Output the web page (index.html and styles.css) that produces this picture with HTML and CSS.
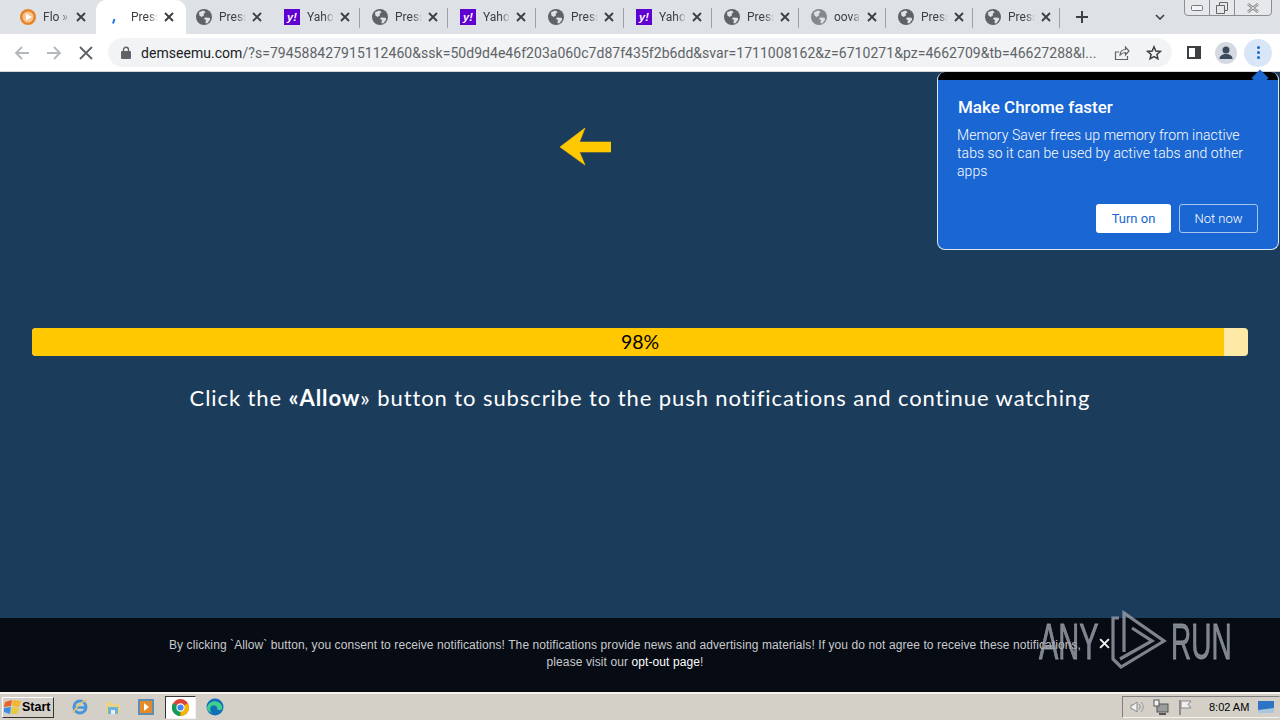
FILE: index.html
```html
<!DOCTYPE html>
<html lang="en">
<head>
<meta charset="utf-8">
<title>Press Allow</title>
<link rel="stylesheet" href="styles.css">
</head>
<body>
<svg class="defs" width="0" height="0" aria-hidden="true">
  <symbol id="globe" viewBox="0 0 16 16">
    <circle cx="8" cy="8" r="8" fill="currentColor"/>
    <path d="M3 3.2 7.4 1.6 9.6 3 7.6 5 8 6.6 5.6 8 3.4 6.4ZM9 8.4l4.6.4.6 1.6-3 4-1.8-.4.6-3L8 10Z" fill="#dee1e6"/>
  </symbol>
  <symbol id="close" viewBox="0 0 10 10">
    <path d="M1 1 9 9M9 1 1 9" stroke="currentColor" stroke-width="1.9" fill="none"/>
  </symbol>
</svg>

<header class="tabstrip">
  <div class="tab"><svg class="favicon" viewBox="0 0 16 16"><circle cx="8" cy="8" r="8" fill="#e8832c"/><circle cx="8" cy="8" r="5.5" fill="#f9c48e"/><path d="M6 4.5 12 8l-6 3.5Z" fill="#fff"/></svg><span class="tab-title">Flo »</span><svg class="tab-close"><use href="#close"/></svg></div>
  <div class="tab active"><svg class="favicon" viewBox="0 0 16 16"><path d="M5 14.500 6.500 10" stroke="#1a73e8" stroke-width="2" fill="none"/></svg><span class="tab-title">Press</span><svg class="tab-close"><use href="#close"/></svg></div>
  <div class="tab"><svg class="favicon globe"><use href="#globe"/></svg><span class="tab-title">Press</span><svg class="tab-close"><use href="#close"/></svg></div>
  <div class="tab"><span class="favicon yahoo">y!</span><span class="tab-title">Yahoo</span><svg class="tab-close"><use href="#close"/></svg></div>
  <div class="tab"><svg class="favicon globe"><use href="#globe"/></svg><span class="tab-title">Press</span><svg class="tab-close"><use href="#close"/></svg></div>
  <div class="tab"><span class="favicon yahoo">y!</span><span class="tab-title">Yahoo</span><svg class="tab-close"><use href="#close"/></svg></div>
  <div class="tab"><svg class="favicon globe"><use href="#globe"/></svg><span class="tab-title">Press</span><svg class="tab-close"><use href="#close"/></svg></div>
  <div class="tab"><span class="favicon yahoo">y!</span><span class="tab-title">Yahoo</span><svg class="tab-close"><use href="#close"/></svg></div>
  <div class="tab narrow"><svg class="favicon globe"><use href="#globe"/></svg><span class="tab-title">Press</span><svg class="tab-close"><use href="#close"/></svg></div>
  <div class="tab narrow"><svg class="favicon globe light"><use href="#globe"/></svg><span class="tab-title">oova</span><svg class="tab-close"><use href="#close"/></svg></div>
  <div class="tab narrow"><svg class="favicon globe"><use href="#globe"/></svg><span class="tab-title">Press</span><svg class="tab-close"><use href="#close"/></svg></div>
  <div class="tab narrow"><svg class="favicon globe"><use href="#globe"/></svg><span class="tab-title">Press</span><svg class="tab-close"><use href="#close"/></svg></div>
  <svg class="new-tab" viewBox="0 0 12 12"><path d="M6 0v12M0 6h12" stroke="#3c4043" stroke-width="2"/></svg>
  <svg class="tab-list" viewBox="0 0 10 6"><path d="M1 1 5 5 9 1" stroke="#3c4043" stroke-width="1.6" fill="none"/></svg>
  <div class="window-controls">
    <span class="win-btn win-min"><svg viewBox="0 0 12 6" width="12" height="6"><rect x=".5" y=".5" width="11" height="5" rx="1" fill="#f3f4f6" stroke="#777"/></svg></span>
    <span class="win-btn win-max"><svg viewBox="0 0 12 12" width="12" height="12"><path d="M3.5 3V.5h8v8H9M.5 3.5h8v8h-8Z" fill="none" stroke="#666"/></svg></span>
    <span class="win-btn win-x"><svg viewBox="0 0 12 10" width="12" height="10"><path d="M1 1l10 8M11 1 1 9" stroke="#777" stroke-width="2.4"/><path d="M1 1l10 8M11 1 1 9" stroke="#eee" stroke-width="1"/></svg></span>
  </div>
</header>

<nav class="toolbar">
  <svg class="nav-icon" viewBox="0 0 16 16"><path d="M15 8H2M8 2 2 8l6 6" stroke="#b4b7bb" stroke-width="1.8" fill="none"/></svg>
  <svg class="nav-icon" viewBox="0 0 16 16"><path d="M1 8h13M8 2l6 6-6 6" stroke="#b4b7bb" stroke-width="1.8" fill="none"/></svg>
  <svg class="nav-icon" viewBox="0 0 16 16"><path d="M2 2l12 12M14 2 2 14" stroke="#5f6368" stroke-width="1.9" fill="none"/></svg>
  <div class="omnibox">
    <svg class="lock" viewBox="0 0 10 13"><path d="M2.5 6V3.8a2.5 2.5 0 0 1 5 0V6" fill="none" stroke="#5f6368" stroke-width="1.4"/><rect y="5" width="10" height="8" rx="1.2" fill="#5f6368"/></svg>
    <span class="url"><span class="url-host">demseemu.com</span>/?s=794588427915112460&amp;ssk=50d9d4e46f203a060c7d87f435f2b6dd&amp;svar=1711008162&amp;z=6710271&amp;pz=4662709&amp;tb=46627288&amp;l...</span>
    <svg class="omni-icon share" viewBox="0 0 16 16"><path d="M5 7H1.500v7.500h12V11M6 10c0-3.500 2.500-5.500 5.500-5.500V2L15 6l-3.500 4V7.500C9 7.500 7.500 8.500 6 10Z" fill="none" stroke="#5f6368" stroke-width="1.200"/></svg>
    <svg class="omni-icon star" viewBox="0 0 16 16"><path d="M8 1.800l1.800 4.200 4.500.4-3.400 3 1 4.400L8 11.500l-3.900 2.300 1-4.400-3.400-3 4.500-.4Z" fill="none" stroke="#3c4043" stroke-width="1.500"/></svg>
  </div>
  <svg class="side-panel" viewBox="0 0 14 13"><rect x="1" y="1" width="12" height="11" fill="#fff" stroke="#3c4043" stroke-width="2"/><rect x="8" y="1" width="5" height="11" fill="#3c4043"/></svg>
  <span class="avatar"><svg viewBox="0 0 20 20" width="20" height="20"><circle cx="10" cy="7" r="3.500" fill="#3c4a5e"/><path d="M3.500 16c0-3.500 3-5 6.500-5s6.500 1.500 6.500 5Z" fill="#3c4a5e"/></svg></span>
  <span class="menu-btn"><i></i><i></i><i></i></span>
</nav>

<main class="page">
  <svg class="arrow" viewBox="0 0 51 39" width="51" height="39"><path d="M0 20 25 1 19.500 15H51V25H19.500L25 38Z" fill="#ffc800" stroke="#ffc800" stroke-width=".6"/></svg>
  <div class="progress" role="progressbar" aria-valuenow="98"><div class="progress-fill"></div><span class="progress-label">98%</span></div>
  <p class="message">Click the <b>«Allow</b>» button to subscribe to the push notifications and continue watching</p>

  <aside class="bubble">
    <div class="bubble-arrow"></div>
    <h2>Make Chrome faster</h2>
    <p>Memory Saver frees up memory from inactive tabs so it can be used by active tabs and other apps</p>
    <div class="bubble-actions"><span class="btn btn-primary">Turn on</span><span class="btn btn-ghost">Not now</span></div>
  </aside>
</main>

<section class="consent">
  <p>By clicking `Allow` button, you consent to receive notifications! The notifications provide news and advertising materials! If you do not agree to receive these notifications,<br>please visit our <span class="opt-out">opt-out page</span>!</p>
  <svg class="consent-close" viewBox="0 0 10 10"><path d="M1 1 9 9M9 1 1 9" stroke="#f0f0f0" stroke-width="1.800"/></svg>
  <div class="watermark">
    <span class="wm-any">ANY</span>
    <svg viewBox="0 0 58 64" width="58" height="64"><path d="M9 8H3V49L11 57 54 31 14 3V42M10 49 42 31 22 18" fill="none" stroke="currentColor" stroke-width="3.200"/></svg>
    <span class="wm-run">RUN</span>
  </div>
</section>

<footer class="taskbar">
  <div class="start"><svg viewBox="0 0 18 16" width="18" height="16"><path d="M1 3 8 1 7 7 0 8Z" fill="#e8632c"/><path d="M9 1 17 2 15 8 8 7Z" fill="#f2b632"/><path d="M0 9 7 8 6 15 0 13Z" fill="#3b8ee0"/><path d="M8 8 15 9 13 15 7 15Z" fill="#e9c93a"/></svg><b>Start</b></div>
  <svg class="task-icon" viewBox="0 0 18 18"><circle cx="9" cy="9" r="6" fill="none" stroke="#4a94d8" stroke-width="3"/><path d="M3 9.500h12" stroke="#4a94d8" stroke-width="2.500"/><path d="M2 15C5 9 11 3 16 2" stroke="#e5c66b" stroke-width="1.500" fill="none"/></svg>
  <svg class="task-icon" viewBox="0 0 18 18"><path d="M2 4h6l1 2h7v10H2Z" fill="#e9d28a"/><rect x="4" y="9" width="10" height="7" fill="#6fb2d8"/><rect x="7" y="12" width="4" height="4" fill="#e8eef2"/></svg>
  <svg class="task-icon" viewBox="0 0 18 18"><rect x="1" y="1" width="16" height="16" fill="#5e8db8"/><rect x="3" y="3" width="12" height="12" fill="#e58a24"/><path d="M7 5l5 4-5 4Z" fill="#fff"/></svg>
  <span class="task-active"><svg viewBox="0 0 18 18" width="17" height="17"><circle cx="9" cy="9" r="9" fill="#db4437"/><path d="M9 9 1.200 4.500A9 9 0 0 0 9 18Z" fill="#0f9d58"/><path d="M9 9V18A9 9 0 0 0 16.800 4.500Z" fill="#f4b400"/><circle cx="9" cy="9" r="4.400" fill="#fff"/><circle cx="9" cy="9" r="3.300" fill="#4285f4"/></svg></span>
  <svg class="task-icon" viewBox="0 0 18 18"><circle cx="9" cy="9" r="8.500" fill="#0f6fb8"/><path d="M1 10C2 4 8 2 12 4c3 1.500 5 4 4 7-1 1.500-4 1.500-5 0 1-2-1-4-4-3.500C4 8 3 12 6 15 3 14 1 12 1 10Z" fill="#3fcf8e"/></svg>
  <div class="tray">
    <svg class="tray-icon" viewBox="0 0 16 16"><path d="M2 6h2l4-3v10L4 10H2Z" fill="#f1f1f1" stroke="#888"/><path d="M10 5c1.500 1.500 1.500 4.500 0 6M12 3c3 3 3 7 0 10" stroke="#999" fill="none"/></svg>
    <svg class="tray-icon" viewBox="0 0 16 16"><rect x="4" y="5" width="11" height="8" fill="#9a9c9c" stroke="#555"/><rect x="1" y="1" width="5" height="6" fill="#f4f4f4" stroke="#555"/><path d="M6 15h7" stroke="#555" stroke-width="2"/></svg>
    <svg class="tray-icon" viewBox="0 0 16 16"><path d="M3 1v15" stroke="#777" stroke-width="1.500"/><path d="M4 2h10l-3 3.500L14 9H4Z" fill="#f0f0f0" stroke="#888"/></svg>
    <span class="clock">8:02 AM</span>
    <svg class="show-desktop" viewBox="0 0 16 12"><rect width="16" height="12" fill="#2f74c4"/><path d="M0 9 16 7v5H0Z" fill="#a8c6e0"/></svg>
  </div>
</footer>
</body>
</html>
```
FILE: styles.css
```css
* { box-sizing: border-box; }
html, body { margin: 0; padding: 0; }
body {
  width: 1280px;
  height: 720px;
  overflow: hidden;
  display: flex;
  flex-direction: column;
  font-family: "Liberation Sans", Arial, sans-serif;
  background: #d4d0c8;
}
.defs { position: absolute; }

/* tab strip */
.tabstrip {
  position: relative;
  flex: 0 0 34px;
  display: flex;
  padding-left: 8px;
  background: #dee1e6;
  color: #3c4043;
}
.tab {
  position: relative;
  flex: 0 0 88px;
  display: flex;
  align-items: center;
  padding-left: 12px;
}
.tab.narrow { flex-basis: 87px; }
.tab::after {
  content: "";
  position: absolute;
  right: 0;
  top: 8px;
  height: 20px;
  width: 1px;
  background: #9ea1a6;
}
.tab:nth-child(1)::after, .tab:nth-child(2)::after, .tab:nth-child(3)::after { display: none; }
.tab.active {
  background: #fff;
  border-radius: 10px 10px 0 0;
  margin-right: -2px;
  z-index: 1;
  padding-left: 12px;
  flex-basis: 90px;
}
.favicon { width: 16px; height: 16px; flex: none; }
.globe { color: #5f6368; }
.globe.light { color: #85888c; }
.yahoo {
  display: flex;
  align-items: center;
  justify-content: center;
  background: #5f01d1;
  color: #fff;
  font-size: 11px;
  font-weight: 700;
  font-style: italic;
}
.tab-title {
  width: 27px;
  margin-left: 7px;
  font-size: 12px;
  font-family: Roboto, sans-serif;
  white-space: nowrap;
  overflow: hidden;
  -webkit-mask-image: linear-gradient(90deg, #000 65%, transparent 100%);
  mask-image: linear-gradient(90deg, #000 65%, transparent 100%);
}
.tab-close { width: 10px; height: 10px; margin-left: 6px; color: #3c4043; flex: none; }
.new-tab { width: 12px; height: 12px; margin: 11px 0 0 16px; flex: none; }
.tab-list { width: 10px; height: 6px; margin: 14px 0 0 67px; flex: none; }
.window-controls {
  position: absolute;
  left: 1184px;
  top: -1px;
  width: 88px;
  height: 17px;
  display: flex;
  border: 1px solid #8a8d92;
  border-radius: 0 0 4px 4px;
  background: #e6e8ec;
}
.win-btn { display: flex; align-items: center; justify-content: center; }
.win-min { width: 25px; border-right: 1px solid #8a8d92; }
.win-max { width: 25px; border-right: 1px solid #8a8d92; }
.win-x { flex: 1; }

/* toolbar */
.toolbar {
  flex: 0 0 38px;
  display: flex;
  align-items: center;
  padding-left: 14px;
  background: #fff;
  border-bottom: 1px solid #d5d7da;
}
.nav-icon { width: 16px; height: 16px; margin-right: 16px; flex: none; }
.omnibox {
  width: 1064px;
  height: 29px;
  margin-left: -2px;
  display: flex;
  align-items: center;
  padding-left: 13px;
  border-radius: 15px;
  background: #f1f3f4;
  flex: none;
}
.lock { width: 10px; height: 13px; flex: none; }
.url {
  width: 962px;
  flex: none;
  margin-left: 10px;
  font-family: Roboto, sans-serif;
  font-size: 14px;
  letter-spacing: 0.04px;
  white-space: nowrap;
  color: #5f6368;
}
.url-host { color: #202124; }
.omni-icon { width: 16px; height: 16px; flex: none; }
.share { margin-left: 11px; }
.star { margin-left: 16px; }
.side-panel { width: 14px; height: 13px; margin-left: 15px; flex: none; }
.avatar {
  width: 22px;
  height: 22px;
  margin-left: 14px;
  border-radius: 50%;
  background: #d5d9e0;
  display: flex;
  align-items: center;
  justify-content: center;
  flex: none;
}
.menu-btn {
  width: 28px;
  height: 28px;
  margin-left: 7px;
  border-radius: 50%;
  background: #d9e6f7;
  display: flex;
  flex-direction: column;
  align-items: center;
  justify-content: center;
  gap: 2px;
  flex: none;
}
.menu-btn i { width: 3px; height: 3px; border-radius: 50%; background: #1a66d2; }

/* page */
.page {
  position: relative;
  flex: 1;
  display: flex;
  flex-direction: column;
  align-items: center;
  padding: 55px 32px 0;
  background: #1c3c5c;
}
.arrow { margin-left: -109px; flex: none; }
.progress {
  position: relative;
  width: 100%;
  height: 28px;
  margin-top: 162px;
  border-radius: 4px;
  overflow: hidden;
  background: #ffe9a6;
  display: flex;
  align-items: center;
  justify-content: center;
  padding-bottom: 2px;
}
.progress-fill { position: absolute; left: 0; top: 0; bottom: 0; width: 98%; background: #ffc800; }
.progress-label {
  position: relative;
  font-family: Lato, sans-serif;
  font-size: 19.500px;
  color: #000;
}
.message {
  margin: 29px 0 0;
  font-family: Lato, sans-serif;
  font-size: 22px;
  line-height: 26px;
  letter-spacing: 0.91px;
  color: #fff;
  white-space: nowrap;
}

/* bubble */
.bubble {
  position: absolute;
  left: 937px;
  top: 0;
  width: 342px;
  height: 178px;
  padding: 25px 20px 0;
  background: linear-gradient(#000 8px, #1a66d2 8px);
  border: 1px solid #dfe8f5;
  border-top: 0;
  border-radius: 8px;
  color: #fff;
  font-family: Roboto, sans-serif;
}
.bubble-arrow {
  position: absolute;
  right: 12px;
  top: 0;
  width: 12px;
  height: 12px;
  background: #1a66d2;
  transform: rotate(45deg);
}
.bubble h2 { margin: 0; font-size: 17px; line-height: 20px; font-weight: 500; }
.bubble p { margin: 9px 0 0 -1px; font-size: 14px; line-height: 18px; font-weight: 300; letter-spacing: 0.06px; }
.bubble-actions { position: absolute; right: 20px; bottom: 16px; display: flex; gap: 8px; }
.btn {
  height: 29px;
  display: flex;
  align-items: center;
  justify-content: center;
  border-radius: 3px;
  font-size: 13px;
  font-weight: 300;
}
.btn-primary { width: 75px; background: #fff; color: #1a66d2; font-weight: 400; }
.btn-ghost { width: 79px; border: 1px solid #a8c7f0; color: #fff; }

/* consent */
.consent {
  position: relative;
  flex: 0 0 74px;
  display: flex;
  justify-content: center;
  padding: 19px 30px 0 0;
  background: #070b13;
}
.consent p {
  margin: 0;
  font-size: 12px;
  line-height: 17px;
  letter-spacing: 0.09px;
  text-align: center;
  color: #c8cacd;
}
.opt-out { color: #fff; }
.consent-close { position: absolute; left: 1099px; top: 20px; width: 11px; height: 11px; }
.watermark {
  position: absolute;
  left: 1039px;
  top: -8px;
  display: flex;
  align-items: center;
  color: rgba(160, 165, 176, 0.78);
  font-size: 50px;
  line-height: 64px;
  -webkit-text-stroke: 0.8px rgba(160, 165, 176, 0.78);
}
.wm-any, .wm-run { display: block; transform-origin: 0 50%; white-space: nowrap; }
.wm-any { width: 71px; transform: scaleX(0.58); }
.wm-run { width: 60px; margin-left: 3px; transform: scaleX(0.56); }

/* taskbar */
.taskbar {
  flex: 0 0 28px;
  display: flex;
  align-items: center;
  padding-left: 2px;
  background: #d4d0c8;
  border-top: 2px solid #f4f2ec;
  position: relative;
}
.start {
  width: 52px;
  height: 21px;
  display: flex;
  align-items: center;
  gap: 0;
  padding-left: 1px;
  background: #d4d0c8;
  border: 1px solid;
  border-color: #fff #333 #333 #fff;
  font-size: 12.500px;
  color: #000;
}
.task-icon { width: 18px; height: 18px; flex: none; margin-left: 15px; }
.start + .task-icon { margin-left: 17px; }
.task-active {
  width: 31px;
  height: 23px;
  margin-left: 10px;
  margin-right: -5px;
  background: #fff;
  border: 1px solid;
  border-color: #333 #f4f2ec #f4f2ec #333;
  display: flex;
  align-items: center;
  justify-content: center;
  flex: none;
}
.tray {
  margin-left: auto;
  width: 158px;
  height: 22px;
  display: flex;
  align-items: center;
  padding-left: 6px;
  border: 1px solid;
  border-color: #808080 #d4d0c8 #f4f2ec #808080;
}
.tray-icon { width: 16px; height: 16px; margin-right: 8px; flex: none; }
.clock { margin-left: 8px; font-size: 11px; color: #000; white-space: nowrap; flex: none; }
.show-desktop { width: 16px; height: 12px; margin-left: 9px; flex: none; }
```
